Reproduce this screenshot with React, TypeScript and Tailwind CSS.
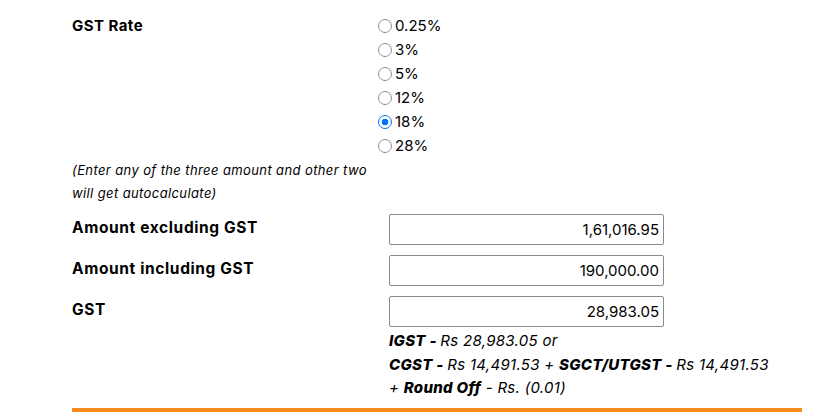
import React from 'react';

const rates = ['0.25%', '3%', '5%', '12%', '18%', '28%'];

const rows = [
    { label: 'Amount excluding GST', value: '1,61,016.95' },
    { label: 'Amount including GST', value: '190,000.00' },
    { label: 'GST', value: '28,983.05' },
];

export default function App() {
    return (
        <div className="min-h-[416px] bg-white text-black font-['Inter','Open_Sans',sans-serif] text-[15px]">
            <div className="ml-[72px] w-[730px] pt-[14px]">
                {/* rate picker */}
                <div className="flex">
                    <div className="w-[306px] font-bold leading-6 tracking-[0.03em]">GST Rate</div>
                    <div className="flex flex-col">
                        {rates.map((r) => (
                            <label key={r} className="flex items-center gap-[3px] leading-6">
                                <input
                                    type="radio"
                                    name="rate"
                                    defaultChecked={r === '18%'}
                                    className="appearance-none w-[14px] h-[14px] m-0 rounded-full border-[1.5px] border-[#8f8f9d] bg-white checked:border-[#0075ff] checked:bg-[radial-gradient(circle,#0075ff_0_3px,#fff_3.6px)]"
                                />
                                <span>{r}</span>
                            </label>
                        ))}
                    </div>
                </div>

                <p className="w-[310px] mt-[1px] text-[13px] italic leading-[23px] tracking-[0.03em]">
                    (Enter any of the three amount and other two will get autocalculate)
                </p>

                {/* amounts */}
                <div className="mt-[9px] flex flex-col gap-[10px]">
                    {rows.map((row) => (
                        <div key={row.label} className="flex items-start">
                            <div className="w-[317px] pt-[2px] text-[15.5px] font-bold leading-6 tracking-[0.04em]">
                                {row.label}
                            </div>
                            <input
                                type="text"
                                defaultValue={row.value}
                                className="w-[275px] h-[31px] px-[4px] text-right border border-[#8a8a8a] rounded-[2px] outline-none"
                            />
                        </div>
                    ))}
                </div>

                <div className="ml-[317px] mt-[2px] italic leading-[23.5px] tracking-[0.02em]">
                    <div>
                        <b className="font-extrabold">IGST - </b>Rs 28,983.05 or
                    </div>
                    <div>
                        <b className="font-extrabold">CGST - </b>Rs 14,491.53 +{' '}
                        <b className="font-extrabold">SGCT/UTGST - </b>Rs 14,491.53
                    </div>
                    <div>
                        + <b className="font-extrabold">Round Off</b> - Rs. (0.01)
                    </div>
                </div>

                <div className="mt-[8px] h-[4px] bg-[#f68b1e]" />
            </div>
        </div>
    );
}
